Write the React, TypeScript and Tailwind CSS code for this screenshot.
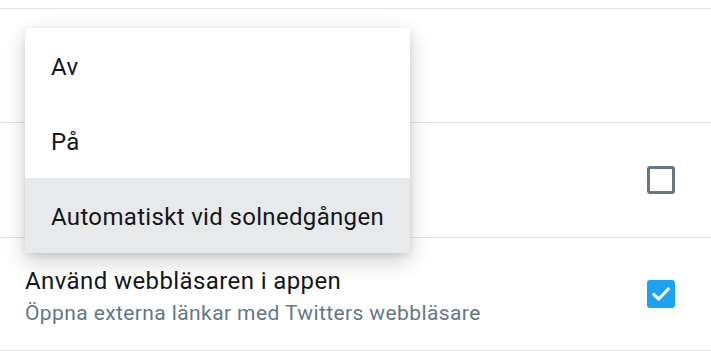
import React from 'react';

const Checkbox: React.FC<{ checked?: boolean }> = ({ checked = false }) =>
  checked ? (
    <div className="w-[28px] h-[28px] rounded-[3px] bg-[#1da1f2] flex items-center justify-center">
      <svg width="22" height="22" viewBox="0 0 24 24" fill="none" stroke="white" strokeWidth="3.4" strokeLinecap="round" strokeLinejoin="round">
        <polyline points="4 12.5 9.5 17.5 20 6.5" />
      </svg>
    </div>
  ) : (
    <div className="w-[28px] h-[28px] rounded-[3px] border-[3px] border-[#657786]" />
  );

const options = ['Av', 'På', 'Automatiskt vid solnedgången'];

export default function App() {
  return (
    <div className="relative w-[711px] h-[357px] bg-white overflow-hidden font-['Roboto',sans-serif]">
      <div className="h-[9px] border-b border-[#e1e4e8]" />
      <div className="h-[114px] border-b border-[#e1e4e8]" />
      <div className="h-[115px] border-b border-[#e1e4e8] flex items-center justify-end pr-[36px]">
        <Checkbox />
      </div>
      <div className="h-[113px] border-b border-[#e1e4e8] flex items-center justify-between pl-[25px] pr-[36px]">
        <div className="self-start pt-[28px] flex flex-col whitespace-nowrap">
          <span className="text-[24px] leading-[30px] tracking-[0.4px] text-[#14171a]">Använd webbläsaren i appen</span>
          <span className="mt-[3px] text-[21px] leading-[28px] tracking-[0.4px] text-[#657786]">Öppna externa länkar med Twitters webbläsare</span>
        </div>
        <Checkbox checked />
      </div>

      {/* dropdown menu over the list */}
      <div className="absolute left-[25px] top-[28px] w-[385px] bg-white rounded-[3px] shadow-[0_8px_22px_rgba(0,0,0,0.2),0_2px_6px_rgba(0,0,0,0.08)] overflow-hidden">
        {options.map((o, i) => (
          <div
            key={o}
            className={`h-[75px] flex items-center px-[26px] pt-[3px] whitespace-nowrap text-[24px] tracking-[0.33px] text-[#14171a] ${i === 2 ? 'bg-[#e8e9eb]' : ''}`}
          >
            {o}
          </div>
        ))}
      </div>
    </div>
  );
}
